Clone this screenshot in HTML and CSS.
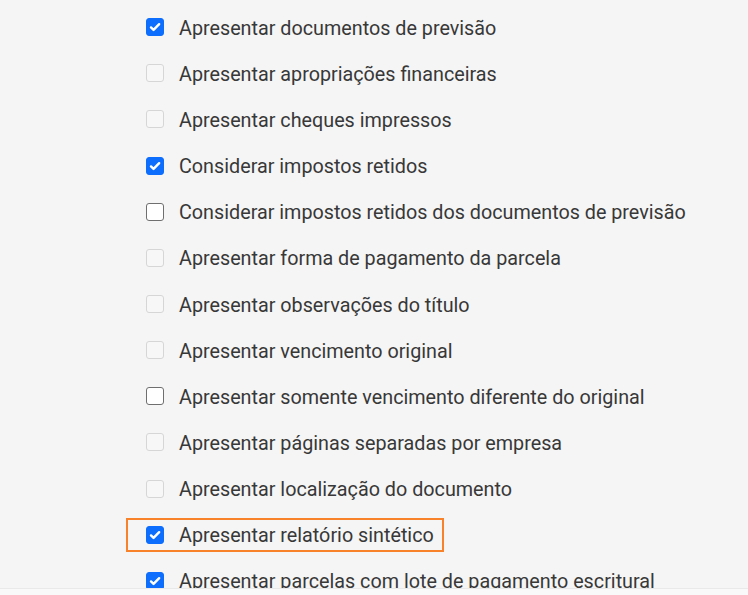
FILE: index.html
```html
<!DOCTYPE html>
<html lang="pt">
<head>
<meta charset="utf-8">
<link rel="stylesheet" href="styles.css">
</head>
<body>
<div class="viewport">
  <ul class="options">
    <li class="opt"><span class="cb checked"></span><span class="label">Apresentar documentos de previsão</span></li>
    <li class="opt"><span class="cb disabled"></span><span class="label">Apresentar apropriações financeiras</span></li>
    <li class="opt"><span class="cb disabled"></span><span class="label">Apresentar cheques impressos</span></li>
    <li class="opt"><span class="cb checked"></span><span class="label">Considerar impostos retidos</span></li>
    <li class="opt"><span class="cb"></span><span class="label">Considerar impostos retidos dos documentos de previsão</span></li>
    <li class="opt"><span class="cb disabled"></span><span class="label">Apresentar forma de pagamento da parcela</span></li>
    <li class="opt"><span class="cb disabled"></span><span class="label">Apresentar observações do título</span></li>
    <li class="opt"><span class="cb disabled"></span><span class="label">Apresentar vencimento original</span></li>
    <li class="opt"><span class="cb"></span><span class="label">Apresentar somente vencimento diferente do original</span></li>
    <li class="opt"><span class="cb disabled"></span><span class="label">Apresentar páginas separadas por empresa</span></li>
    <li class="opt"><span class="cb disabled"></span><span class="label">Apresentar localização do documento</span></li>
    <li class="opt highlight"><span class="cb checked"></span><span class="label">Apresentar relatório sintético</span></li>
    <li class="opt"><span class="cb checked"></span><span class="label">Apresentar parcelas com lote de pagamento escritural</span></li>
  </ul>
</div>
<div class="bottom-band"></div>
</body>
</html>
```
FILE: styles.css
```css
html, body {
  margin: 0;
  padding: 0;
  background: #f5f5f5;
  font-family: Roboto, "Liberation Sans", sans-serif;
}
.viewport {
  height: 588px;
  overflow: hidden;
  border-bottom: 1px solid #e9e9e9;
}
.options {
  list-style: none;
  margin: 0;
  padding: 4px 0 0 146px;
}
.opt {
  position: relative;
  display: flex;
  align-items: center;
  height: 46.17px;
  gap: 15px;
}
.cb {
  box-sizing: border-box;
  width: 18px;
  height: 18px;
  flex: none;
  border-radius: 3px;
  border: 1.5px solid #6f6f6f;
  background: #fff;
}
.cb.disabled {
  border-color: #d6d6d6;
  background: #f7f7f7;
}
.cb.checked {
  border-color: #0d6efd;
  background: #0d6efd url("data:image/svg+xml,%3Csvg xmlns='http://www.w3.org/2000/svg' viewBox='0 0 20 20'%3E%3Cpath fill='none' stroke='%23fff' stroke-linecap='round' stroke-linejoin='round' stroke-width='3' d='M5 10.5l3.2 3.2 7-7.2'/%3E%3C/svg%3E") center/100% no-repeat;
}
.label {
  font-size: 19.75px;
  color: #383838;
  white-space: nowrap;
  padding-top: 2px;
}
.highlight::before {
  content: "";
  position: absolute;
  left: -20px;
  width: 318px;
  top: 6px;
  height: 34px;
  box-sizing: border-box;
  border: 2px solid #f7822a;
}
.bottom-band {
  height: 6px;
  background: #f9f9f9;
}
```
